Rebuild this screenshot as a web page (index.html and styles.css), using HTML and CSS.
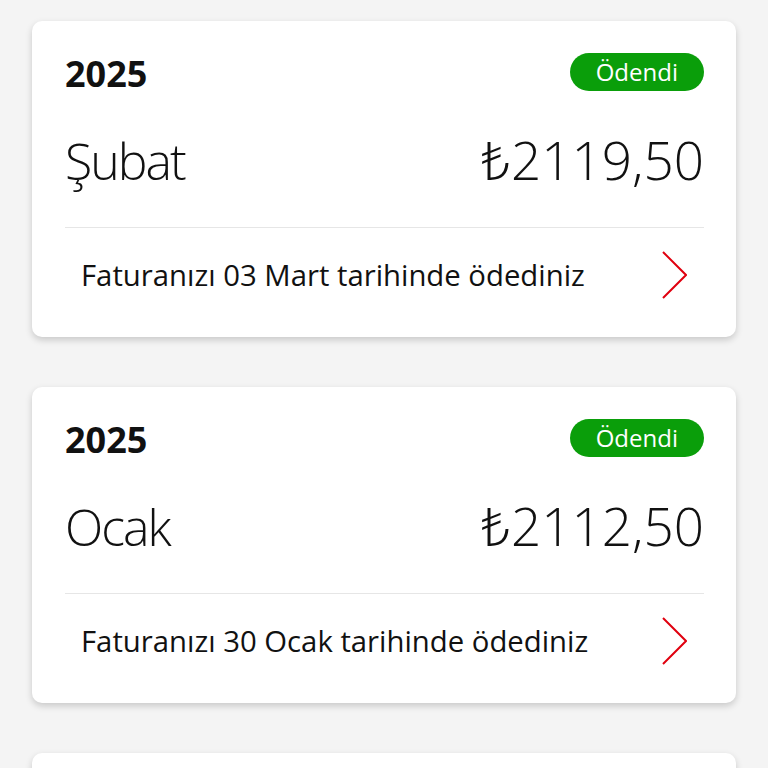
FILE: index.html
```html
<!DOCTYPE html>
<html lang="tr">
<head>
<meta charset="utf-8">
<title>Faturalar</title>
<link rel="stylesheet" href="styles.css">
</head>
<body>
<main class="list">
  <section class="card">
    <div class="top-row">
      <span class="year">2025</span>
      <span class="badge">Ödendi</span>
    </div>
    <div class="title-row">
      <span class="month">Şubat</span>
      <span class="amount">₺2119,50</span>
    </div>
    <div class="footer-row">
      <span class="note">Faturanızı 03 Mart tarihinde ödediniz</span>
      <svg class="chev" width="25" height="48" viewBox="0 0 25 48"><polyline points="1,1 24,24 1,47" fill="none" stroke="#e0000f" stroke-width="2"/></svg>
    </div>
  </section>
  <section class="card">
    <div class="top-row">
      <span class="year">2025</span>
      <span class="badge">Ödendi</span>
    </div>
    <div class="title-row">
      <span class="month">Ocak</span>
      <span class="amount">₺2112,50</span>
    </div>
    <div class="footer-row">
      <span class="note">Faturanızı 30 Ocak tarihinde ödediniz</span>
      <svg class="chev" width="25" height="48" viewBox="0 0 25 48"><polyline points="1,1 24,24 1,47" fill="none" stroke="#e0000f" stroke-width="2"/></svg>
    </div>
  </section>
  <section class="card card-partial">
  </section>
</main>
</body>
</html>
```
FILE: styles.css
```css
html, body {
  margin: 0;
  padding: 0;
  background: #f4f4f4;
}
body {
  font-family: "Open Sans", "Noto Sans", sans-serif;
  color: #111;
  overflow: hidden;
  height: 768px;
}
.list {
  display: flex;
  flex-direction: column;
  gap: 50px;
  padding: 21px 32px 0 32px;
}
.card {
  background: #fff;
  border-radius: 10px;
  box-shadow: 0 3px 7px rgba(0, 0, 0, 0.18);
  padding: 31px 32px 41px 33px;
}
.card-partial {
  height: 240px;
  padding: 0;
}
.top-row {
  display: flex;
  justify-content: space-between;
  align-items: flex-start;
  height: 44px;
}
.year {
  font-size: 36px;
  font-weight: 700;
  line-height: 44px;
}
.badge {
  background: #0a9e0a;
  color: #fff;
  font-size: 24px;
  line-height: 38px;
  height: 38px;
  padding: 0 26px;
  border-radius: 19px;
  margin-top: 1px;
}
.title-row {
  display: flex;
  justify-content: space-between;
  align-items: baseline;
  margin-top: 34px;
  padding-bottom: 36px;
  border-bottom: 1px solid #e6e6e6;
}
.month, .amount {
  font-weight: 300;
  line-height: 60px;
}
.month {
  font-size: 50px;
  letter-spacing: -2px;
}
.amount {
  font-size: 53px;
}
.footer-row {
  display: flex;
  justify-content: space-between;
  align-items: center;
  padding: 26px 17px 0 16px;
  height: 42px;
}
.note {
  font-size: 29.3px;
  line-height: 40px;
}
.chev {
  display: block;
}
```
